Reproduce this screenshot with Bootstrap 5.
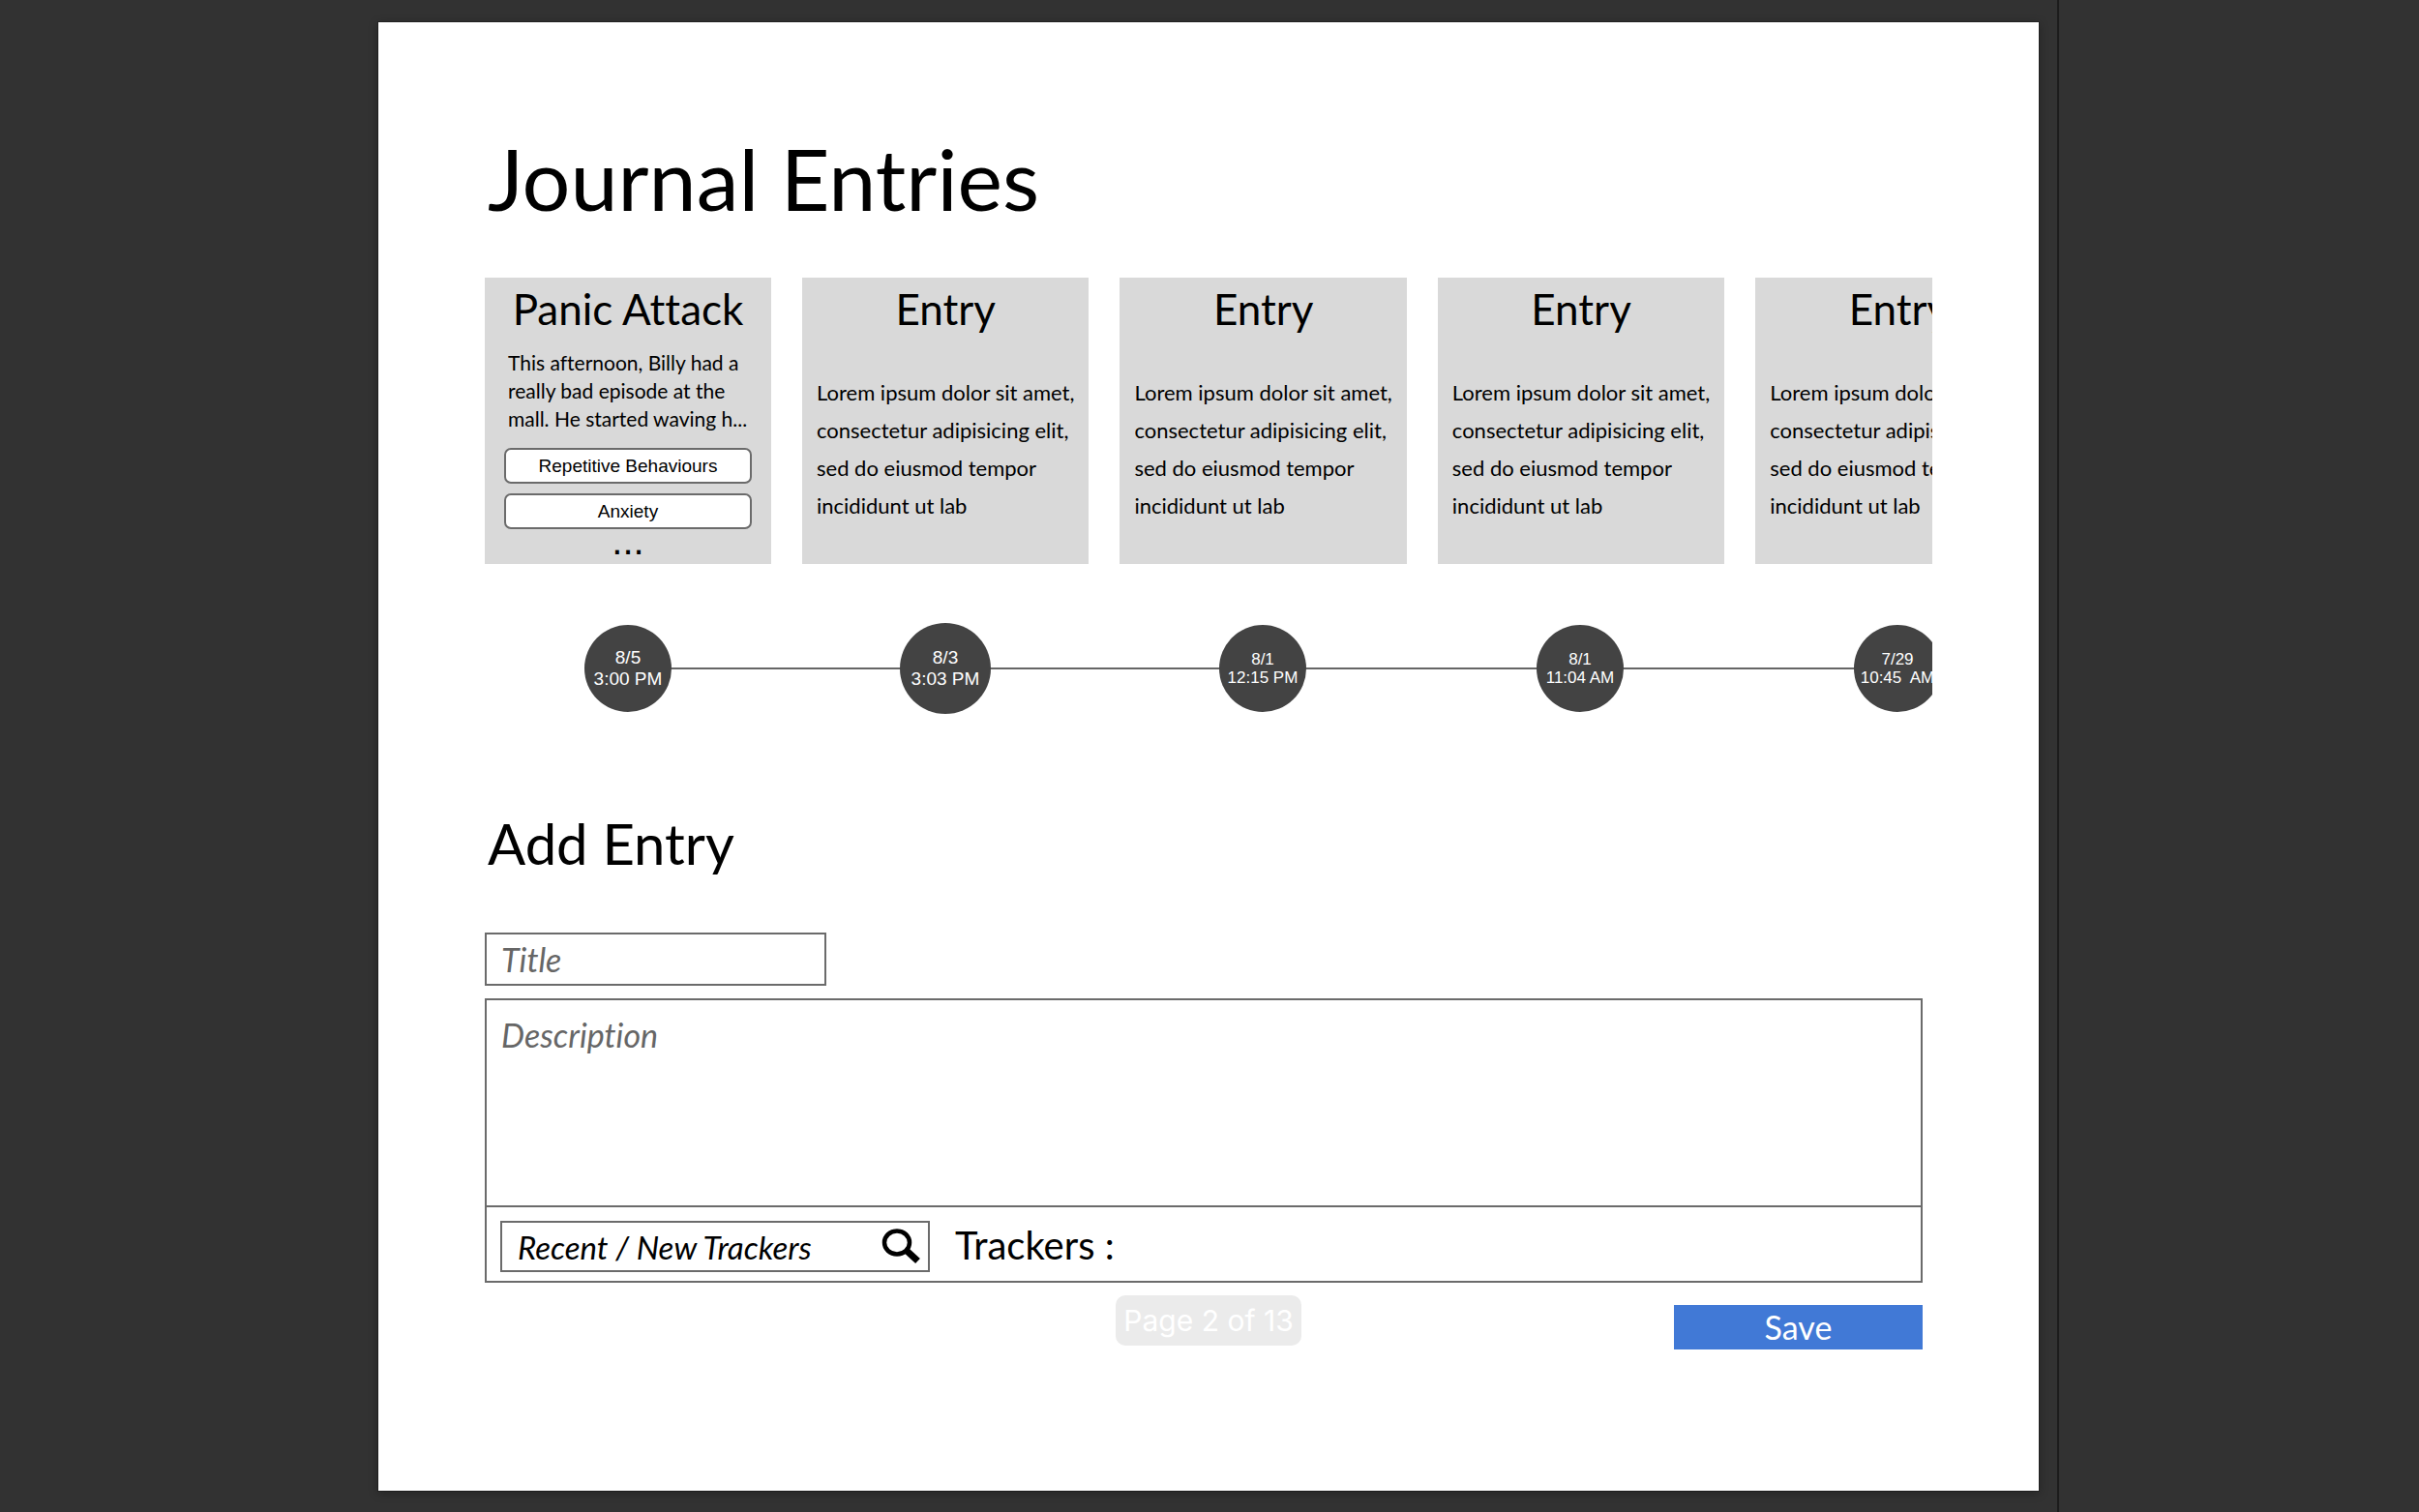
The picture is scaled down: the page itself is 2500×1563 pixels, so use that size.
<!DOCTYPE html>
<html lang="en">
<head>
<meta charset="utf-8">
<meta name="viewport" content="width=device-width, initial-scale=1">
<title>Journal Entries</title>
<link href="https://cdn.jsdelivr.net/npm/bootstrap@5.3.0/dist/css/bootstrap.min.css" rel="stylesheet">
<style>
  body { background: #323232; color: #000; font-family: Lato, sans-serif; font-variant-ligatures: none; }
  .gutter-start { flex: 0 0 15.64%; }
  .gutter-end { flex: 0 0 14.96%; border-left: 2px solid #1c1c1c; }
  .sheet-wrap { padding: 23px 19px 22px 0; min-width: 0; }
  .sheet { background: #fff; padding: 109px 110px 60px; box-shadow: 0 0 0 1px rgba(0,0,0,.25), 0 2px 10px rgba(0,0,0,.3); }
  h1, h2 { font-weight: 400; padding-left: 3px; }
  h1 { font-size: 88px; line-height: 104px; margin-bottom: 51px; }
  h2 { font-size: 58px; line-height: 70px; margin: 99px 0 57px; }
  .strip { gap: 32px; }
  .entry { flex: 0 0 296px; min-height: 296px; background: #d9d9d9; padding: 6px 15px 0; }
  .entry h3 { font-size: 44px; line-height: 52px; font-weight: 400; margin: 0 -15px; text-align: center; }
  .entry p { font-size: 22px; line-height: 39px; margin: 41px 0 0; white-space: nowrap; }
  .entry .summary { font-size: 21px; line-height: 29px; margin: 15px 9px 16px; }
  .tag-btn { --bs-btn-font-family: "Liberation Sans", sans-serif; --bs-btn-font-size: 19px; --bs-btn-line-height: 33px; --bs-btn-padding-y: 0; --bs-btn-border-width: 2px; --bs-btn-border-radius: 7px; --bs-btn-color: #000; --bs-btn-bg: #fff; --bs-btn-border-color: #6b6b6b; --bs-btn-hover-bg: #f2f2f2; }
  .tags { gap: 10px; margin: 0 5px; }
  .more { font: 40px/24px "Liberation Sans", sans-serif; text-align: center; }
  .timeline { gap: 32px; margin: 61px 0 0; padding: 0; list-style: none; height: 94px; }
  .timeline::before { content: ""; position: absolute; left: 148px; right: 0; top: 46px; height: 2px; background: #666; }
  .timeline li { flex: 0 0 296px; position: relative; }
  .stamp { width: 90px; height: 90px; border-radius: 50%; background: #434343; color: #fff; font: 17px/19px "Liberation Sans", sans-serif; text-align: center; white-space: pre; }
  .stamp-lg { font-size: 19px; line-height: 22px; }
  .stamp-on { width: 94px; height: 94px; }
  .entry-form { margin-right: 10px; }
  .field { border: 2px solid #6b6b6b; border-radius: 0; font-size: 34px; font-style: italic; color: #000; padding: 0 15px; font-variant-ligatures: none; }
  .field::placeholder { color: #666; opacity: 1; }
  .field-title { width: 353px; height: 55px; margin-bottom: 13px; }
  .editor { border: 2px solid #6b6b6b; }
  .editor textarea { border: 0; height: 212px; padding: 15px 15px; line-height: 41px; resize: none; }
  .tracker-bar { border-top: 2px solid #6b6b6b; padding: 14px 14px 9px; gap: 26px; font-size: 40px; line-height: 46px; }
  .tracker-label { margin-bottom: 4px; }
  .tracker-search { flex: 0 0 444px; border: 2px solid #6b6b6b; height: 53px; padding-right: 8px; }
  .tracker-search .field { border: 0; flex: 1 1 0; font-size: 33px; padding: 0 0 0 16px; line-height: 41px; }
  .tracker-search .field::placeholder { color: #000; }
  .save-btn { --bs-btn-font-size: 34px; --bs-btn-line-height: 46px; --bs-btn-padding-y: 0; --bs-btn-border-width: 0; --bs-btn-border-radius: 0; --bs-btn-bg: #4179d6; --bs-btn-hover-bg: #3569c0; width: 257px; margin-top: 23px; }
  .page-note { left: 50%; bottom: 150px; transform: translateX(-50%); background: #ebebeb; color: #fff; border-radius: 10px; font: 30px/52px Inter, sans-serif; width: 192px; text-align: center; }
</style>
</head>
<body>
<div class="d-flex min-vh-100">
  <div class="gutter-start"></div>
  <div class="sheet-wrap d-flex flex-grow-1">
    <main class="sheet position-relative flex-grow-1 w-100">
      <h1>Journal Entries</h1>
      <section class="overflow-hidden" aria-label="Entries">
        <div class="strip d-flex">
          <article class="entry">
            <h3>Panic Attack</h3>
            <p class="summary">This afternoon, Billy had a<br>really bad episode at the<br>mall. He started waving h...</p>
            <div class="tags d-grid">
              <button type="button" class="btn tag-btn">Repetitive Behaviours</button>
              <button type="button" class="btn tag-btn">Anxiety</button>
            </div>
            <div class="more">...</div>
          </article>
          <article class="entry">
            <h3>Entry</h3>
            <p>Lorem ipsum dolor sit amet,<br>consectetur adipisicing elit,<br>sed do eiusmod tempor<br>incididunt ut lab</p>
          </article>
          <article class="entry">
            <h3>Entry</h3>
            <p>Lorem ipsum dolor sit amet,<br>consectetur adipisicing elit,<br>sed do eiusmod tempor<br>incididunt ut lab</p>
          </article>
          <article class="entry">
            <h3>Entry</h3>
            <p>Lorem ipsum dolor sit amet,<br>consectetur adipisicing elit,<br>sed do eiusmod tempor<br>incididunt ut lab</p>
          </article>
          <article class="entry">
            <h3>Entry</h3>
            <p>Lorem ipsum dolor sit amet,<br>consectetur adipisicing elit,<br>sed do eiusmod tempor<br>incididunt ut lab</p>
          </article>
        </div>
        <ol class="timeline d-flex align-items-center position-relative">
          <li class="d-flex justify-content-center"><time class="stamp stamp-lg d-flex align-items-center justify-content-center">8/5
3:00 PM</time></li>
          <li class="d-flex justify-content-center"><time class="stamp stamp-lg stamp-on d-flex align-items-center justify-content-center">8/3
3:03 PM</time></li>
          <li class="d-flex justify-content-center"><time class="stamp d-flex align-items-center justify-content-center">8/1
12:15 PM</time></li>
          <li class="d-flex justify-content-center"><time class="stamp d-flex align-items-center justify-content-center">8/1
11:04 AM</time></li>
          <li class="d-flex justify-content-center"><time class="stamp d-flex align-items-center justify-content-center">7/29
10:45  AM</time></li>
        </ol>
      </section>
      <form class="entry-form">
        <h2>Add Entry</h2>
        <input type="text" class="form-control field field-title" placeholder="Title" aria-label="Title">
        <div class="editor">
          <textarea class="form-control field" placeholder="Description" aria-label="Description"></textarea>
          <div class="tracker-bar d-flex align-items-center">
            <div class="tracker-search d-flex align-items-center">
              <input type="search" class="form-control field h-100" placeholder="Recent / New Trackers" aria-label="Recent / New Trackers">
              <svg width="40" height="37" viewBox="0 0 40 37" fill="none" stroke="#000" aria-hidden="true">
                <ellipse cx="16" cy="14.500" rx="13" ry="12" stroke-width="4.500"/>
                <path d="M25 22L37.500 33.500" stroke-width="7"/>
              </svg>
            </div>
            <span class="tracker-label">Trackers :</span>
          </div>
        </div>
        <div class="d-flex justify-content-end">
          <button type="submit" class="btn btn-primary save-btn">Save</button>
        </div>
      </form>
      <div class="page-note position-absolute">Page 2 of 13</div>
    </main>
  </div>
  <div class="gutter-end"></div>
</div>
<script src="https://cdn.jsdelivr.net/npm/bootstrap@5.3.0/dist/js/bootstrap.bundle.min.js"></script>
</body>
</html>
